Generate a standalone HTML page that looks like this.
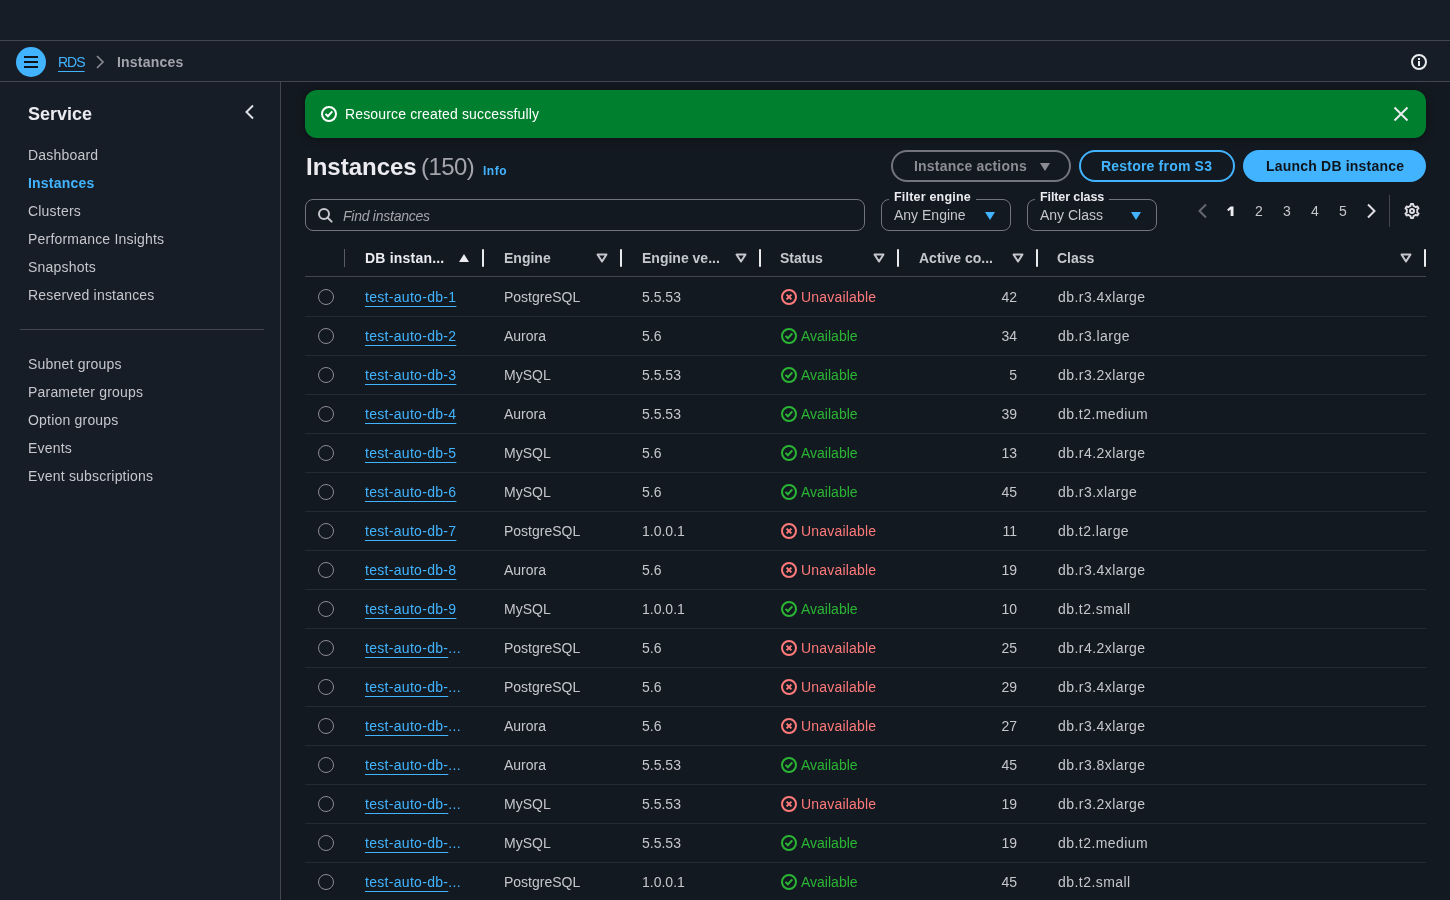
<!DOCTYPE html>
<html><head><meta charset="utf-8"><title>Instances</title>
<style>
*{box-sizing:border-box;margin:0;padding:0}
html,body{width:1450px;height:900px;overflow:hidden;background:#131920;font-family:"Liberation Sans",sans-serif;font-size:14px;line-height:20px;color:#c6c6cd}
#wrap{position:absolute;left:0;top:0;width:1450px;height:900px;will-change:transform}
.abs{position:absolute}
#top{position:absolute;left:0;top:0;width:1450px;height:41px;background:#161d26;border-bottom:1px solid #424650}
#crumbs{position:absolute;left:0;top:41px;width:1450px;height:41px;background:#161d26;border-bottom:1px solid #424650}
#side{position:absolute;left:0;top:82px;width:281px;height:818px;background:#161d26;border-right:1px solid #424650}
.burger{position:absolute;left:16px;top:47px;width:30px;height:30px;border-radius:50%;background:#42b4ff}
.burger i{position:absolute;left:8px;width:14px;height:2px;background:#0f141a}
.nav{position:absolute;left:28px;color:#c6c6cd;white-space:nowrap;letter-spacing:0.2px}
.flash{position:absolute;left:305px;top:90px;width:1121px;height:48px;background:#00802f;border-radius:12px;box-shadow:0 1px 8px rgba(0,0,0,.35)}
.btn{position:absolute;top:150px;height:32px;border-radius:16px;font-weight:bold;white-space:nowrap;letter-spacing:0.2px}
.sel{position:absolute;top:199px;height:32px;border:1px solid #72747e;border-radius:8px}
.lbl{position:absolute;font-size:12.5px;font-weight:bold;color:#ebebf0;background:#131920;padding:0 5px;line-height:16px;white-space:nowrap;letter-spacing:0.2px}
.hdr{position:absolute;top:248px;height:20px;font-weight:bold;color:#c6c6cd;white-space:nowrap}
.sep{position:absolute;top:249px;width:2px;height:18px;background:#e9ebed;border-radius:1px}
.tri{position:absolute;top:253px;color:#c6c6cd;line-height:0}
.tri svg{display:block}
.row{position:absolute;left:305px;width:1121px;height:39px;border-bottom:1px solid #232b37}
.row .c{position:absolute;top:9px;white-space:nowrap}
.radio{position:absolute;left:13px;top:11px;width:16px;height:16px;border-radius:50%;border:1px solid #8c8c94}
.c1{left:60px}
.c2{left:199px}
.c3{left:337px}
.c4{left:476px}
.c5{left:600px;width:112px;text-align:right}
.c6{left:753px;letter-spacing:0.45px}
.lk{color:#42b4ff;text-decoration:underline;text-decoration-thickness:1px;text-underline-offset:4px;letter-spacing:0.3px}
.ell{color:#42b4ff;letter-spacing:0.3px}
.st{display:inline-flex;align-items:center}
.st svg{margin-right:4px;flex:none}
.ok{color:#2bb534}
.err{color:#ff7a7a}
</style></head><body><div id="wrap">
<div id="top"></div>
<div id="crumbs">
  <div class="burger" style="top:6px"><i style="top:9px"></i><i style="top:14px"></i><i style="top:19px"></i></div>
  <span class="abs" style="left:58px;top:11px;color:#42b4ff;text-decoration:underline;text-decoration-thickness:1px;text-underline-offset:4px;letter-spacing:-1px">RDS</span>
  <svg class="abs" style="left:94px;top:13px" width="12" height="16" viewBox="0 0 12 16"><path d="M3 2 L9 8 L3 14" fill="none" stroke="#8c8c94" stroke-width="1.6"/></svg>
  <span class="abs" style="left:117px;top:11px;color:#a4a4ad;font-weight:bold;letter-spacing:0.2px">Instances</span>
  <svg class="abs" style="left:1411px;top:13px" width="16" height="16" viewBox="0 0 16 16"><circle cx="8" cy="8" r="7" fill="none" stroke="#e9ebed" stroke-width="2"/><rect x="7" y="7" width="2" height="5" fill="#e9ebed"/><rect x="7" y="4" width="2" height="2" fill="#e9ebed"/></svg>
</div>
<div id="side">
  <span class="abs" style="left:28px;top:20px;font-size:18px;line-height:24px;font-weight:bold;color:#ebebf0">Service</span>
  <svg class="abs" style="left:242px;top:22px" width="14" height="16" viewBox="0 0 14 16"><path d="M11 1.5 L4.5 8 L11 14.5" fill="none" stroke="#dedee3" stroke-width="2"/></svg>
  <span class="nav" style="top:63px">Dashboard</span>
  <span class="nav" style="top:91px;color:#42b4ff;font-weight:bold">Instances</span>
  <span class="nav" style="top:119px">Clusters</span>
  <span class="nav" style="top:147px">Performance Insights</span>
  <span class="nav" style="top:175px">Snapshots</span>
  <span class="nav" style="top:203px">Reserved instances</span>
  <div class="abs" style="left:20px;top:247px;width:244px;height:1px;background:#424650"></div>
  <span class="nav" style="top:272px">Subnet groups</span>
  <span class="nav" style="top:300px">Parameter groups</span>
  <span class="nav" style="top:328px">Option groups</span>
  <span class="nav" style="top:356px">Events</span>
  <span class="nav" style="top:384px">Event subscriptions</span>
</div>

<div class="flash">
  <svg class="abs" style="left:16px;top:16px" width="16" height="16" viewBox="0 0 16 16"><circle cx="8" cy="8" r="7" fill="none" stroke="#ffffff" stroke-width="2"/><path d="M4.5 7.9 L6.9 10.2 L11.3 5.3" fill="none" stroke="#ffffff" stroke-width="2"/></svg>
  <span class="abs" style="left:40px;top:14px;color:#ffffff;white-space:nowrap;letter-spacing:0.15px">Resource created successfully</span>
  <svg class="abs" style="left:1088px;top:16px" width="16" height="16" viewBox="0 0 16 16"><path d="M1.5 1.5 L14.5 14.5 M14.5 1.5 L1.5 14.5" fill="none" stroke="#e9ebed" stroke-width="2"/></svg>
</div>

<span class="abs" style="left:306px;top:155px;font-size:24px;line-height:24px;font-weight:bold;color:#ebebf0;white-space:nowrap">Instances</span>
<span class="abs" style="left:421px;top:155px;font-size:24px;line-height:24px;color:#a4a4ad;white-space:nowrap;letter-spacing:-0.6px">(150)</span>
<span class="abs" style="left:483px;top:163px;font-size:12px;line-height:16px;font-weight:bold;color:#42b4ff;letter-spacing:0.5px">Info</span>

<div class="btn" style="left:891px;width:180px;border:2px solid #72747e;color:#8c8c94">
  <span class="abs" style="left:21px;top:4px">Instance actions</span>
  <svg class="abs" style="left:146px;top:10px" width="12" height="10" viewBox="0 0 12 10"><path d="M1 1 H11 L6 9 Z" fill="#8c8c94"/></svg>
</div>
<div class="btn" style="left:1079px;width:156px;border:2px solid #42b4ff;color:#42b4ff">
  <span class="abs" style="left:20px;top:4px">Restore from S3</span>
</div>
<div class="btn" style="left:1243px;width:183px;background:#42b4ff;color:#0f141a">
  <span class="abs" style="left:23px;top:6px">Launch DB instance</span>
</div>

<div class="sel" style="left:305px;width:560px">
  <svg class="abs" style="left:11px;top:8px" width="16" height="16" viewBox="0 0 16 16"><circle cx="7" cy="6" r="5" fill="none" stroke="#c6c6cd" stroke-width="2"/><path d="M10.5 9.5 L14.6 13.6" stroke="#c6c6cd" stroke-width="2" stroke-linecap="round"/></svg>
  <span class="abs" style="left:37px;top:6px;font-style:italic;color:#a4a4ad;white-space:nowrap;letter-spacing:-0.25px">Find instances</span>
</div>

<div class="sel" style="left:881px;width:130px">
  <span class="abs" style="left:12px;top:5px;color:#c6c6cd;white-space:nowrap">Any Engine</span>
  <svg class="abs" style="left:102px;top:11px" width="12" height="10" viewBox="0 0 12 10"><path d="M1 1 H11 L6 9 Z" fill="#42b4ff"/></svg>
</div>
<span class="lbl" style="left:889px;top:189px">Filter engine</span>
<div class="sel" style="left:1027px;width:130px">
  <span class="abs" style="left:12px;top:5px;color:#c6c6cd;white-space:nowrap">Any Class</span>
  <svg class="abs" style="left:102px;top:11px" width="12" height="10" viewBox="0 0 12 10"><path d="M1 1 H11 L6 9 Z" fill="#42b4ff"/></svg>
</div>
<span class="lbl" style="left:1035px;top:189px;letter-spacing:-0.1px">Filter class</span>

<svg class="abs" style="left:1196px;top:203px" width="14" height="16" viewBox="0 0 14 16"><path d="M10 1.5 L3.5 8 L10 14.5" fill="none" stroke="#656871" stroke-width="2"/></svg>
<svg class="abs" style="left:1226px;top:205px" width="10" height="12" viewBox="0 0 10 12"><path d="M4.5 1.4 H7.5 V11 H4.6 V4.6 L2.2 6.3 L1.2 4.5 Z" fill="#ebebf0"/></svg>
<span class="abs" style="left:1255px;top:201px;color:#c6c6cd">2</span>
<span class="abs" style="left:1283px;top:201px;color:#c6c6cd">3</span>
<span class="abs" style="left:1311px;top:201px;color:#c6c6cd">4</span>
<span class="abs" style="left:1339px;top:201px;color:#c6c6cd">5</span>
<svg class="abs" style="left:1364px;top:203px" width="14" height="16" viewBox="0 0 14 16"><path d="M4 1.5 L10.5 8 L4 14.5" fill="none" stroke="#dedee3" stroke-width="2"/></svg>
<div class="abs" style="left:1389px;top:195px;width:1px;height:32px;background:#424650"></div>
<svg class="abs" style="left:1404px;top:203px" width="16" height="16" viewBox="0 0 16 16"><path d="M10.64 3.38 L9.41 2.83 L9.19 1.00 L6.81 1.00 L6.59 2.83 L5.36 3.38 L4.29 4.16 L2.59 3.43 L1.40 5.49 L2.89 6.59 L2.75 8.00 L2.89 9.41 L1.40 10.51 L2.59 12.57 L4.29 11.84 L5.36 12.62 L6.59 13.17 L6.81 15.00 L9.19 15.00 L9.41 13.17 L10.64 12.62 L11.71 11.84 L13.41 12.57 L14.60 10.51 L13.11 9.41 L13.25 8.00 L13.11 6.59 L14.60 5.49 L13.41 3.43 L11.71 4.16 Z" fill="none" stroke="#dedee3" stroke-width="1.8" stroke-linejoin="round"/><circle cx="8" cy="8" r="2" fill="none" stroke="#dedee3" stroke-width="2"/></svg>

<!-- table header -->
<div class="abs" style="left:344px;top:249px;width:1px;height:18px;background:#5a5c64"></div>
<span class="hdr" style="left:365px;color:#ebebf0;letter-spacing:0.2px">DB instan...</span>
<svg class="abs" style="left:458px;top:253px" width="12" height="10" viewBox="0 0 12 10"><path d="M1 9 H11 L6 1 Z" fill="#ebebf0"/></svg>
<div class="sep" style="left:482px"></div>
<span class="hdr" style="left:504px">Engine</span>
<span class="tri" style="left:596px"><svg width="12" height="10" viewBox="0 0 12 10"><path d="M1.5 1.5 H10.5 L6 8.5 Z" fill="none" stroke="currentColor" stroke-width="2" stroke-linejoin="round"/></svg></span>
<div class="sep" style="left:620px"></div>
<span class="hdr" style="left:642px">Engine ve...</span>
<span class="tri" style="left:735px"><svg width="12" height="10" viewBox="0 0 12 10"><path d="M1.5 1.5 H10.5 L6 8.5 Z" fill="none" stroke="currentColor" stroke-width="2" stroke-linejoin="round"/></svg></span>
<div class="sep" style="left:759px"></div>
<span class="hdr" style="left:780px">Status</span>
<span class="tri" style="left:873px"><svg width="12" height="10" viewBox="0 0 12 10"><path d="M1.5 1.5 H10.5 L6 8.5 Z" fill="none" stroke="currentColor" stroke-width="2" stroke-linejoin="round"/></svg></span>
<div class="sep" style="left:897px"></div>
<span class="hdr" style="left:919px">Active co...</span>
<span class="tri" style="left:1012px"><svg width="12" height="10" viewBox="0 0 12 10"><path d="M1.5 1.5 H10.5 L6 8.5 Z" fill="none" stroke="currentColor" stroke-width="2" stroke-linejoin="round"/></svg></span>
<div class="sep" style="left:1036px"></div>
<span class="hdr" style="left:1057px">Class</span>
<span class="tri" style="left:1400px"><svg width="12" height="10" viewBox="0 0 12 10"><path d="M1.5 1.5 H10.5 L6 8.5 Z" fill="none" stroke="currentColor" stroke-width="2" stroke-linejoin="round"/></svg></span>
<div class="sep" style="left:1424px"></div>
<div class="abs" style="left:305px;top:276px;width:1121px;height:1px;background:#424650"></div>

<div class="row" style="top:278px">
<span class="radio"></span>
<span class="c c1"><span class="lk">test-auto-db-1</span></span>
<span class="c c2">PostgreSQL</span>
<span class="c c3">5.5.53</span>
<span class="c c4"><span class="st err"><svg width="16" height="16" viewBox="0 0 16 16"><circle cx="8" cy="8" r="7" fill="none" stroke="currentColor" stroke-width="2"/><path d="M5.6 5.6 L10.4 10.4 M10.4 5.6 L5.6 10.4" fill="none" stroke="currentColor" stroke-width="2"/></svg><span style="letter-spacing:0.2px">Unavailable</span></span></span>
<span class="c c5">42</span>
<span class="c c6">db.r3.4xlarge</span>
</div><div class="row" style="top:317px">
<span class="radio"></span>
<span class="c c1"><span class="lk">test-auto-db-2</span></span>
<span class="c c2">Aurora</span>
<span class="c c3">5.6</span>
<span class="c c4"><span class="st ok"><svg width="16" height="16" viewBox="0 0 16 16"><circle cx="8" cy="8" r="7" fill="none" stroke="currentColor" stroke-width="2"/><path d="M4.5 7.9 L6.9 10.2 L11.3 5.3" fill="none" stroke="currentColor" stroke-width="2"/></svg><span>Available</span></span></span>
<span class="c c5">34</span>
<span class="c c6">db.r3.large</span>
</div><div class="row" style="top:356px">
<span class="radio"></span>
<span class="c c1"><span class="lk">test-auto-db-3</span></span>
<span class="c c2">MySQL</span>
<span class="c c3">5.5.53</span>
<span class="c c4"><span class="st ok"><svg width="16" height="16" viewBox="0 0 16 16"><circle cx="8" cy="8" r="7" fill="none" stroke="currentColor" stroke-width="2"/><path d="M4.5 7.9 L6.9 10.2 L11.3 5.3" fill="none" stroke="currentColor" stroke-width="2"/></svg><span>Available</span></span></span>
<span class="c c5">5</span>
<span class="c c6">db.r3.2xlarge</span>
</div><div class="row" style="top:395px">
<span class="radio"></span>
<span class="c c1"><span class="lk">test-auto-db-4</span></span>
<span class="c c2">Aurora</span>
<span class="c c3">5.5.53</span>
<span class="c c4"><span class="st ok"><svg width="16" height="16" viewBox="0 0 16 16"><circle cx="8" cy="8" r="7" fill="none" stroke="currentColor" stroke-width="2"/><path d="M4.5 7.9 L6.9 10.2 L11.3 5.3" fill="none" stroke="currentColor" stroke-width="2"/></svg><span>Available</span></span></span>
<span class="c c5">39</span>
<span class="c c6">db.t2.medium</span>
</div><div class="row" style="top:434px">
<span class="radio"></span>
<span class="c c1"><span class="lk">test-auto-db-5</span></span>
<span class="c c2">MySQL</span>
<span class="c c3">5.6</span>
<span class="c c4"><span class="st ok"><svg width="16" height="16" viewBox="0 0 16 16"><circle cx="8" cy="8" r="7" fill="none" stroke="currentColor" stroke-width="2"/><path d="M4.5 7.9 L6.9 10.2 L11.3 5.3" fill="none" stroke="currentColor" stroke-width="2"/></svg><span>Available</span></span></span>
<span class="c c5">13</span>
<span class="c c6">db.r4.2xlarge</span>
</div><div class="row" style="top:473px">
<span class="radio"></span>
<span class="c c1"><span class="lk">test-auto-db-6</span></span>
<span class="c c2">MySQL</span>
<span class="c c3">5.6</span>
<span class="c c4"><span class="st ok"><svg width="16" height="16" viewBox="0 0 16 16"><circle cx="8" cy="8" r="7" fill="none" stroke="currentColor" stroke-width="2"/><path d="M4.5 7.9 L6.9 10.2 L11.3 5.3" fill="none" stroke="currentColor" stroke-width="2"/></svg><span>Available</span></span></span>
<span class="c c5">45</span>
<span class="c c6">db.r3.xlarge</span>
</div><div class="row" style="top:512px">
<span class="radio"></span>
<span class="c c1"><span class="lk">test-auto-db-7</span></span>
<span class="c c2">PostgreSQL</span>
<span class="c c3">1.0.0.1</span>
<span class="c c4"><span class="st err"><svg width="16" height="16" viewBox="0 0 16 16"><circle cx="8" cy="8" r="7" fill="none" stroke="currentColor" stroke-width="2"/><path d="M5.6 5.6 L10.4 10.4 M10.4 5.6 L5.6 10.4" fill="none" stroke="currentColor" stroke-width="2"/></svg><span style="letter-spacing:0.2px">Unavailable</span></span></span>
<span class="c c5">11</span>
<span class="c c6">db.t2.large</span>
</div><div class="row" style="top:551px">
<span class="radio"></span>
<span class="c c1"><span class="lk">test-auto-db-8</span></span>
<span class="c c2">Aurora</span>
<span class="c c3">5.6</span>
<span class="c c4"><span class="st err"><svg width="16" height="16" viewBox="0 0 16 16"><circle cx="8" cy="8" r="7" fill="none" stroke="currentColor" stroke-width="2"/><path d="M5.6 5.6 L10.4 10.4 M10.4 5.6 L5.6 10.4" fill="none" stroke="currentColor" stroke-width="2"/></svg><span style="letter-spacing:0.2px">Unavailable</span></span></span>
<span class="c c5">19</span>
<span class="c c6">db.r3.4xlarge</span>
</div><div class="row" style="top:590px">
<span class="radio"></span>
<span class="c c1"><span class="lk">test-auto-db-9</span></span>
<span class="c c2">MySQL</span>
<span class="c c3">1.0.0.1</span>
<span class="c c4"><span class="st ok"><svg width="16" height="16" viewBox="0 0 16 16"><circle cx="8" cy="8" r="7" fill="none" stroke="currentColor" stroke-width="2"/><path d="M4.5 7.9 L6.9 10.2 L11.3 5.3" fill="none" stroke="currentColor" stroke-width="2"/></svg><span>Available</span></span></span>
<span class="c c5">10</span>
<span class="c c6">db.t2.small</span>
</div><div class="row" style="top:629px">
<span class="radio"></span>
<span class="c c1"><span class="lk">test-auto-db-</span><span class="ell">...</span></span>
<span class="c c2">PostgreSQL</span>
<span class="c c3">5.6</span>
<span class="c c4"><span class="st err"><svg width="16" height="16" viewBox="0 0 16 16"><circle cx="8" cy="8" r="7" fill="none" stroke="currentColor" stroke-width="2"/><path d="M5.6 5.6 L10.4 10.4 M10.4 5.6 L5.6 10.4" fill="none" stroke="currentColor" stroke-width="2"/></svg><span style="letter-spacing:0.2px">Unavailable</span></span></span>
<span class="c c5">25</span>
<span class="c c6">db.r4.2xlarge</span>
</div><div class="row" style="top:668px">
<span class="radio"></span>
<span class="c c1"><span class="lk">test-auto-db-</span><span class="ell">...</span></span>
<span class="c c2">PostgreSQL</span>
<span class="c c3">5.6</span>
<span class="c c4"><span class="st err"><svg width="16" height="16" viewBox="0 0 16 16"><circle cx="8" cy="8" r="7" fill="none" stroke="currentColor" stroke-width="2"/><path d="M5.6 5.6 L10.4 10.4 M10.4 5.6 L5.6 10.4" fill="none" stroke="currentColor" stroke-width="2"/></svg><span style="letter-spacing:0.2px">Unavailable</span></span></span>
<span class="c c5">29</span>
<span class="c c6">db.r3.4xlarge</span>
</div><div class="row" style="top:707px">
<span class="radio"></span>
<span class="c c1"><span class="lk">test-auto-db-</span><span class="ell">...</span></span>
<span class="c c2">Aurora</span>
<span class="c c3">5.6</span>
<span class="c c4"><span class="st err"><svg width="16" height="16" viewBox="0 0 16 16"><circle cx="8" cy="8" r="7" fill="none" stroke="currentColor" stroke-width="2"/><path d="M5.6 5.6 L10.4 10.4 M10.4 5.6 L5.6 10.4" fill="none" stroke="currentColor" stroke-width="2"/></svg><span style="letter-spacing:0.2px">Unavailable</span></span></span>
<span class="c c5">27</span>
<span class="c c6">db.r3.4xlarge</span>
</div><div class="row" style="top:746px">
<span class="radio"></span>
<span class="c c1"><span class="lk">test-auto-db-</span><span class="ell">...</span></span>
<span class="c c2">Aurora</span>
<span class="c c3">5.5.53</span>
<span class="c c4"><span class="st ok"><svg width="16" height="16" viewBox="0 0 16 16"><circle cx="8" cy="8" r="7" fill="none" stroke="currentColor" stroke-width="2"/><path d="M4.5 7.9 L6.9 10.2 L11.3 5.3" fill="none" stroke="currentColor" stroke-width="2"/></svg><span>Available</span></span></span>
<span class="c c5">45</span>
<span class="c c6">db.r3.8xlarge</span>
</div><div class="row" style="top:785px">
<span class="radio"></span>
<span class="c c1"><span class="lk">test-auto-db-</span><span class="ell">...</span></span>
<span class="c c2">MySQL</span>
<span class="c c3">5.5.53</span>
<span class="c c4"><span class="st err"><svg width="16" height="16" viewBox="0 0 16 16"><circle cx="8" cy="8" r="7" fill="none" stroke="currentColor" stroke-width="2"/><path d="M5.6 5.6 L10.4 10.4 M10.4 5.6 L5.6 10.4" fill="none" stroke="currentColor" stroke-width="2"/></svg><span style="letter-spacing:0.2px">Unavailable</span></span></span>
<span class="c c5">19</span>
<span class="c c6">db.r3.2xlarge</span>
</div><div class="row" style="top:824px">
<span class="radio"></span>
<span class="c c1"><span class="lk">test-auto-db-</span><span class="ell">...</span></span>
<span class="c c2">MySQL</span>
<span class="c c3">5.5.53</span>
<span class="c c4"><span class="st ok"><svg width="16" height="16" viewBox="0 0 16 16"><circle cx="8" cy="8" r="7" fill="none" stroke="currentColor" stroke-width="2"/><path d="M4.5 7.9 L6.9 10.2 L11.3 5.3" fill="none" stroke="currentColor" stroke-width="2"/></svg><span>Available</span></span></span>
<span class="c c5">19</span>
<span class="c c6">db.t2.medium</span>
</div><div class="row" style="top:863px">
<span class="radio"></span>
<span class="c c1"><span class="lk">test-auto-db-</span><span class="ell">...</span></span>
<span class="c c2">PostgreSQL</span>
<span class="c c3">1.0.0.1</span>
<span class="c c4"><span class="st ok"><svg width="16" height="16" viewBox="0 0 16 16"><circle cx="8" cy="8" r="7" fill="none" stroke="currentColor" stroke-width="2"/><path d="M4.5 7.9 L6.9 10.2 L11.3 5.3" fill="none" stroke="currentColor" stroke-width="2"/></svg><span>Available</span></span></span>
<span class="c c5">45</span>
<span class="c c6">db.t2.small</span>
</div>
</div></body></html>
